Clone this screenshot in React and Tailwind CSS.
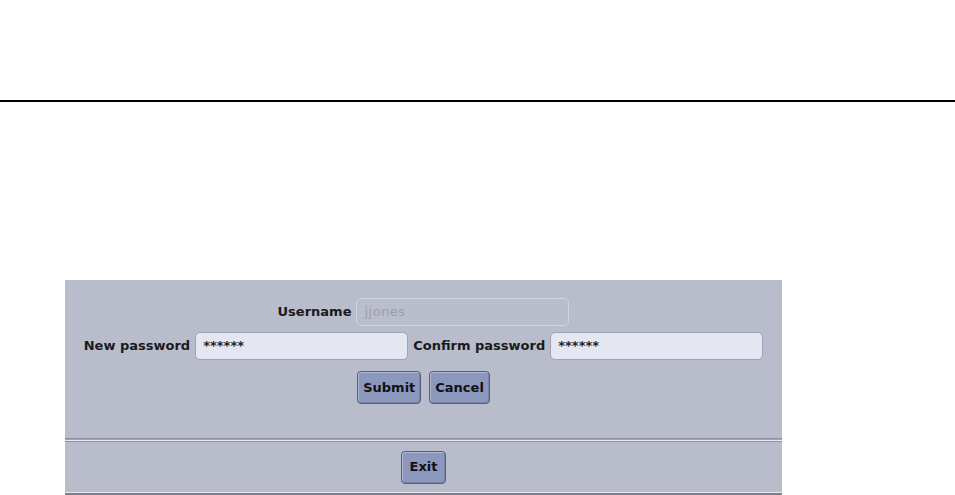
import React from "react";

const font = { fontFamily: '"DejaVu Sans", Verdana, sans-serif' };

function Field({ value, disabled, w = "w-[213px]" }) {
  return (
    <div
      className={`${w} h-[28px] rounded-[5px] border flex items-center px-[7px] ${
        disabled
          ? "bg-[#babdcc] border-[#d2d4df] text-[#9a9db0] text-[13px] tracking-[0.5px]"
          : "bg-[#e4e6f1] border-[#9ea2b4] text-[#222] font-bold text-[13px]"
      }`}
      style={font}
    >
      {value}
    </div>
  );
}

function Btn({ children, wide }) {
  return (
    <button
      className={`h-[33px] ${wide ? "px-[8px]" : "px-[5px]"} rounded-[4px] border border-[#565d7a] bg-[#8c97be] text-[13px] font-bold text-[#111] shadow-[inset_1px_1px_0_#b3bad6,inset_-1px_-1px_0_#7a84a8]`}
      style={font}
    >
      {children}
    </button>
  );
}

export default function App() {
  return (
    <div className="w-[955px] h-[495px] bg-white overflow-hidden" style={font}>
      <div className="h-[100px]" />
      <div className="h-[2px] bg-black" />
      <div className="ml-[65px] mt-[178px] w-[717px] bg-[#b9bccb]">
        <div className="h-[158px] pt-[18px] flex flex-col items-center">
          <div className="flex items-center gap-[5px]">
            <span className="text-[13px] font-bold text-[#1a1a1a]">Username</span>
            <Field value="jjones" disabled />
          </div>
          <div className="flex items-center gap-[5px] mt-[6px]">
            <span className="text-[13px] font-bold text-[#1a1a1a]">New password</span>
            <Field value="******" />
            <span className="text-[13px] font-bold text-[#1a1a1a]">Confirm password</span>
            <Field value="******" />
          </div>
          <div className="flex items-center gap-[8px] mt-[11px]">
            <Btn>Submit</Btn>
            <Btn>Cancel</Btn>
          </div>
        </div>
        <div className="h-px bg-[#8c90a0]" />
        <div className="h-px bg-[#a2a5b6]" />
        <div className="h-px bg-[#e7e8ef]" />
        <div className="h-px bg-[#9094a4]" />
        <div className="h-[50px] flex items-center justify-center">
          <Btn wide>Exit</Btn>
        </div>
        <div className="h-px bg-[#e7e8ef]" />
        <div className="h-[2px] bg-[#7d808c]" />
      </div>
    </div>
  );
}
